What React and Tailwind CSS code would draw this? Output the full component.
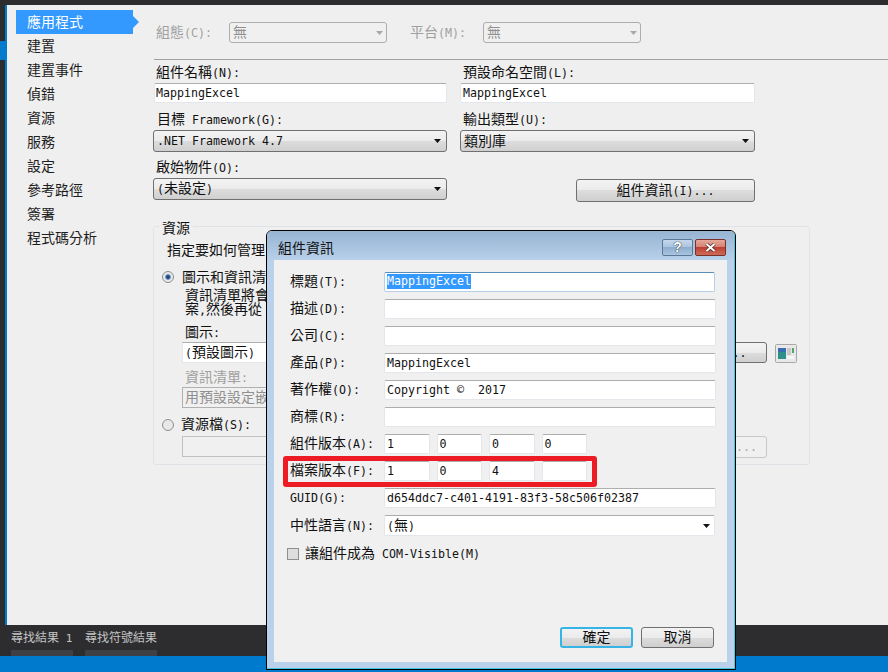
import React from 'react';

const cjkRun = /([\u2E80-\u9FFF\uF900-\uFAFF\uFF00-\uFFEF]+)/;

// the picture mixes 14px CJK with half-width mono latin, so each run gets its own font
const Mix = ({ text, small = false }) => (
    <span className="inline-block mb-[3px] whitespace-pre">
        {text.split(cjkRun).filter(Boolean).map((part, i) =>
            cjkRun.test(part) ? (
                <span key={i} className={`font-['Noto_Sans_CJK_TC',sans-serif] ${small ? 'text-[12px]' : 'text-[14px]'}`}>{part}</span>
            ) : (
                <span key={i} className={`font-['DejaVu_Sans_Mono',monospace] ${small ? 'text-[11px]' : 'text-[11.63px]'}`}>{part}</span>
            )
        )}
    </span>
);

const Arrow = ({ muted = false }) => (
    <svg width="7" height="4" viewBox="0 0 7 4" className="shrink-0">
        <path d="M0 0h7L3.5 4z" fill={muted ? '#a8a8a8' : '#111111'} />
    </svg>
);

const TextBox = ({ value, className = 'w-full' }) => (
    <div className={`h-5 flex items-center shrink-0 bg-white border border-[#e3e7ec] border-t-[#adadad] rounded-[2px] pl-[2px] text-[#111111] leading-none overflow-hidden whitespace-nowrap ${className}`}>
        {value ? <Mix text={value} /> : null}
    </div>
);

const ComboBox = ({ value, className = 'h-[22px]' }) => (
    <div className={`flex items-center justify-between pl-[3px] pr-[5px] border border-[#707070] rounded-[3px] bg-[linear-gradient(#f3f3f3,#ebebeb_50%,#dddddd_50%,#cfcfcf)] text-[#111111] leading-none ${className}`}>
        <Mix text={value} />
        <Arrow />
    </div>
);

const MutedCombo = ({ value }) => (
    <div className="w-[158px] h-[21px] flex items-center justify-between pl-[3px] pr-[3px] border border-[#adadad] rounded-[3px] bg-[#f0f0f0] text-[#8f8f8f] leading-none">
        <Mix text={value} />
        <Arrow muted />
    </div>
);

const PushButton = ({ label, className = '' }) => (
    <div className={`flex items-center justify-center border border-[#707070] rounded-[3px] bg-[linear-gradient(#f3f3f3,#ebebeb_50%,#dddddd_50%,#cfcfcf)] text-[#111111] leading-none ${className}`}>
        <Mix text={label} />
    </div>
);

const Radio = ({ checked = false }) => (
    <div className="w-3 h-3 rounded-full border border-[#8e8f8f] bg-[#e8e8e8] flex items-center justify-center shrink-0">
        {checked && <div className="w-[6px] h-[6px] rounded-full bg-[#27457a] border border-[#6f9fcc]" />}
    </div>
);

const FieldLabel = ({ text, className = '' }) => (
    <div className={`flex items-center text-[#111111] leading-none ${className}`}>
        <Mix text={text} />
    </div>
);

const RowLabel = ({ text }) => (
    <div className="w-[94px] h-5 shrink-0 flex items-center leading-none text-[#111111]"><Mix text={text} /></div>
);

const sections = ['建置', '建置事件', '偵錯', '資源', '服務', '設定', '參考路徑', '簽署', '程式碼分析'];

const dialogRows = [
    ['描述(D):', ''],
    ['公司(C):', ''],
    ['產品(P):', 'MappingExcel'],
    ['著作權(O):', 'Copyright ©  2017'],
    ['商標(R):', ''],
];

const VersionRow = ({ label, parts }) => (
    <div className="flex items-center">
        <RowLabel text={label} />
        <div className="flex gap-[7px]">
            {parts.map((part, i) => (
                <TextBox key={i} value={part} className="w-[45.5px]" />
            ))}
        </div>
    </div>
);

const AssemblyDialog = () => (
    <div className="absolute left-[266px] top-[230px] w-[470px] h-[440px] border border-black rounded-t-[6px] overflow-hidden">
        <div className="h-full flex flex-col border-r border-b border-r-[#44c8e0] border-b-[#44c8e0] bg-[linear-gradient(#97b4d3,#b9d1ea_30px)]">
            <div className="h-[29px] shrink-0 flex items-center pl-[11px] pr-2 text-[#111111] leading-none">
                <div className="pt-[5px]"><Mix text="組件資訊" /></div>
                <div className="ml-auto flex gap-[2px] pt-[3px]">
                    <div className="w-[31px] h-[17px] flex items-center justify-center rounded-[2px] border border-[#5c7896] bg-[linear-gradient(#c5d8ec,#a9c3de_50%,#8fadcd_50%,#a8c4df)]">
                        <span className="font-['Liberation_Sans',sans-serif] font-bold text-[14px] leading-none text-white [text-shadow:0_0_1px_#222,0_0_1px_#222]">?</span>
                    </div>
                    <div className="w-[31px] h-[17px] flex items-center justify-center rounded-[2px] border border-[#7a3028] bg-[linear-gradient(#e6a89b,#d47f70_50%,#bd4032_50%,#cf6a58)]">
                        <svg width="11" height="9" viewBox="0 0 11 9">
                            <path d="M1.5 1l8 7M9.5 1l-8 7" stroke="#4a2a26" strokeWidth="3.4" />
                            <path d="M1.5 1l8 7M9.5 1l-8 7" stroke="#ffffff" strokeWidth="2" />
                        </svg>
                    </div>
                </div>
            </div>
            <div className="mx-[7px] h-[402px] shrink-0 bg-[#f0f0f0] flex flex-col pl-4 pt-3 pr-3 pb-[14px]">
                <div className="flex flex-col gap-[7px]">
                    <div className="flex items-center">
                        <RowLabel text="標題(T):" />
                        <div className="w-[332px] h-5 flex items-center bg-white border border-[#b5cfe7] border-t-[#5a8db8] rounded-[2px] pl-[2px] leading-none">
                            <span className="bg-[#3399ff] text-white h-[15px] mb-[2px] flex items-center"><Mix text="MappingExcel" /></span>
                        </div>
                    </div>
                    {dialogRows.map(([label, value]) => (
                        <div key={label} className="flex items-center">
                            <RowLabel text={label} />
                            <TextBox value={value} className="w-[332px]" />
                        </div>
                    ))}
                    <VersionRow label="組件版本(A):" parts={['1', '0', '0', '0']} />
                    <VersionRow label="檔案版本(F):" parts={['1', '0', '4', '']} />
                    <div className="flex items-center">
                        <RowLabel text="GUID(G):" />
                        <TextBox value="d654ddc7-c401-4191-83f3-58c506f02387" className="w-[332px]" />
                    </div>
                    <div className="flex items-center">
                        <RowLabel text="中性語言(N):" />
                        <div className="w-[332px] h-[21px] flex items-center justify-between bg-white border border-[#e3e7ec] border-t-[#adadad] rounded-[2px] pl-[2px] pr-[4px] leading-none text-[#111111]">
                            <Mix text="(無)" />
                            <Arrow />
                        </div>
                    </div>
                </div>
                <div className="h-3 flex items-center -ml-[3px] mt-3 text-[#111111] leading-none">
                    <div className="w-3 h-3 border border-[#8e8f8f] bg-[#dedede] mr-[6px] shrink-0" />
                    <Mix text="讓組件成為 COM-Visible(M)" />
                </div>
                <div className="mt-auto flex justify-end gap-2 pr-px">
                    <PushButton label="確定" className="w-[73px] h-[21px] !border-[#36b4e6] border-2" />
                    <PushButton label="取消" className="w-[73px] h-[21px]" />
                </div>
            </div>
        </div>
        <div className="absolute left-[16px] top-[225px] w-[314px] h-[31px] border-[5px] border-[#ed1c24] rounded-[3px]" />
    </div>
);

const ResourceGroup = () => (
    <div className="relative -ml-px mt-6 w-[657px] h-[239px] border border-[#dfe3e8] rounded-[3px] text-[#111111] leading-none">
        <div className="absolute left-[5px] -top-[8px] px-[3px] bg-[#efefef] leading-none"><Mix text="資源" /></div>
        <div className="h-[31px] pt-[15px] pl-[13px] flex items-center"><Mix text="指定要如何管理" /></div>
        <div className="mt-[11px] h-4 flex items-center pl-2">
            <Radio checked />
            <span className="ml-2"><Mix text="圖示和資訊清" /></span>
        </div>
        <div className="mt-[3px] pl-[31px] leading-[15px]">
            <div className="h-[15px] flex items-center"><Mix text="資訊清單將會" /></div>
            <div className="h-[15px] flex items-center"><Mix text="案,然後再從" /></div>
        </div>
        <div className="mt-[7px] h-4 pl-[31px] flex items-center"><Mix text="圖示:" /></div>
        <div className="mt-px pl-7 flex items-start">
            <div className="w-[520px] h-[21px] flex items-center bg-white border border-[#e3e7ec] border-t-[#adadad] pl-[2px]"><Mix text="(預設圖示)" /></div>
            <PushButton label="..." className="ml-[3px] w-[62px] h-[21px]" />
            <svg width="22" height="19" viewBox="0 0 22 19" className="ml-2 mt-[2px]">
                <rect x="0.5" y="0.5" width="21" height="18" rx="1" fill="#e8e8e8" stroke="#a8a8a8" />
                <rect x="3" y="4" width="8" height="11" fill="#2f8f8a" />
                <rect x="3" y="4" width="8" height="4" fill="#3a6db0" />
                <rect x="12" y="4" width="4" height="7" fill="#c8c8c8" />
                <rect x="17" y="4" width="2" height="5" fill="#5aa070" />
                <rect x="12" y="12" width="7" height="3" fill="#f5f5f5" />
            </svg>
        </div>
        <div className="mt-[7px] h-4 pl-[31px] flex items-center text-[#a0a0a0]"><Mix text="資訊清單:" /></div>
        <div className="mt-px ml-7 w-[520px] h-[21px] flex items-center border border-[#b0b0b0] bg-[#f0f0f0] pl-[2px] text-[#8f8f8f]">
            <Mix text="用預設設定嵌" />
        </div>
        <div className="mt-[9px] h-4 flex items-center pl-2">
            <Radio />
            <span className="ml-[7px]"><Mix text="資源檔(S):" /></span>
        </div>
        <div className="mt-[3px] pl-7 flex items-start">
            <div className="w-[520px] h-[21px] border border-[#c0c0c0] bg-[#f0f0f0]" />
            <div className="ml-[3px] w-[62px] h-[22px] flex items-center justify-end pr-[9px] border border-[#c8c8c8] rounded-[3px] bg-[#f0f0f0] text-[#a8a8a8]">
                <Mix text="..." />
            </div>
        </div>
    </div>
);

const ProjectForm = () => (
    <div className="flex-1 min-w-0">
        <div className="pt-[17px] pl-[2px] flex items-center">
            <FieldLabel text="組態(C):" className="w-[73px] !text-[#a0a0a0]" />
            <MutedCombo value="無" />
            <FieldLabel text="平台(M):" className="ml-[23px] w-[73px] !text-[#a0a0a0]" />
            <MutedCombo value="無" />
        </div>
        <div className="mt-4 h-px bg-[#a0a0a0]" />
        <div className="pt-[3px] grid grid-cols-[293px_295px] gap-x-[13px]">
            <div className="h-[46px]">
                <FieldLabel text="組件名稱(N):" className="h-5 pl-[2px]" />
                <TextBox value="MappingExcel" className="w-full !pl-px" />
            </div>
            <div className="h-[46px]">
                <FieldLabel text="預設命名空間(L):" className="h-5 pl-[3px]" />
                <TextBox value="MappingExcel" />
            </div>
            <div className="h-[49px]">
                <FieldLabel text="目標 Framework(G):" className="h-[21px] pl-[3px]" />
                <ComboBox value=".NET Framework 4.7" className="h-[22px] -ml-px" />
            </div>
            <div className="h-[49px]">
                <FieldLabel text="輸出類型(U):" className="h-[21px] pl-[3px]" />
                <ComboBox value="類別庫" />
            </div>
            <div>
                <FieldLabel text="啟始物件(O):" className="h-5 pl-[2px]" />
                <ComboBox value="(未設定)" className="h-[22px] -ml-px" />
            </div>
            <div className="pt-[21px] pl-[116px]">
                <PushButton label="組件資訊(I)..." className="w-[179px] h-[23px]" />
            </div>
        </div>
        <ResourceGroup />
    </div>
);

export default function App() {
    return (
        <div className="relative w-[888px] h-[672px] overflow-hidden flex flex-col bg-[#2d2d30]">
            <div className="h-[5px] shrink-0" />
            <div className="h-[620px] shrink-0 flex">
                <div className="w-[5px] pt-[36px]">
                    <div className="h-[19px] bg-[#007acc]" />
                </div>
                <div className="flex-1 min-w-0 flex border-l-2 border-[#007acc] bg-[#efefef]">
                    <div className="w-[147px] shrink-0 pt-[5px] pl-[9px]">
                        <div className="relative w-[117px] h-6 flex items-center pl-[11px] bg-[#3399ff] text-white leading-none">
                            <Mix text="應用程式" />
                            <div className="absolute -right-[6px] top-[6px] border-y-[6px] border-y-transparent border-l-[6px] border-l-[#3399ff]" />
                        </div>
                        {sections.map((name) => (
                            <div key={name} className="h-6 flex items-center pl-[11px] text-[#1e1e1e] leading-none">
                                <Mix text={name} />
                            </div>
                        ))}
                    </div>
                    <ProjectForm />
                </div>
            </div>
            <div className="h-[31px] shrink-0 pl-[11px] flex gap-3 text-[#c4c4c4] leading-none">
                <div className="w-[62px] flex flex-col justify-between">
                    <div className="h-[25px] flex items-center whitespace-nowrap"><Mix text="尋找結果 1" small /></div>
                    <div className="h-[6px] bg-[#3f3f46]" />
                </div>
                <div className="w-[72px] flex flex-col justify-between">
                    <div className="h-[25px] flex items-center whitespace-nowrap"><Mix text="尋找符號結果" small /></div>
                    <div className="h-[6px] bg-[#3f3f46]" />
                </div>
            </div>
            <div className="flex-1 bg-[#007acc]" />
            <AssemblyDialog />
        </div>
    );
}
